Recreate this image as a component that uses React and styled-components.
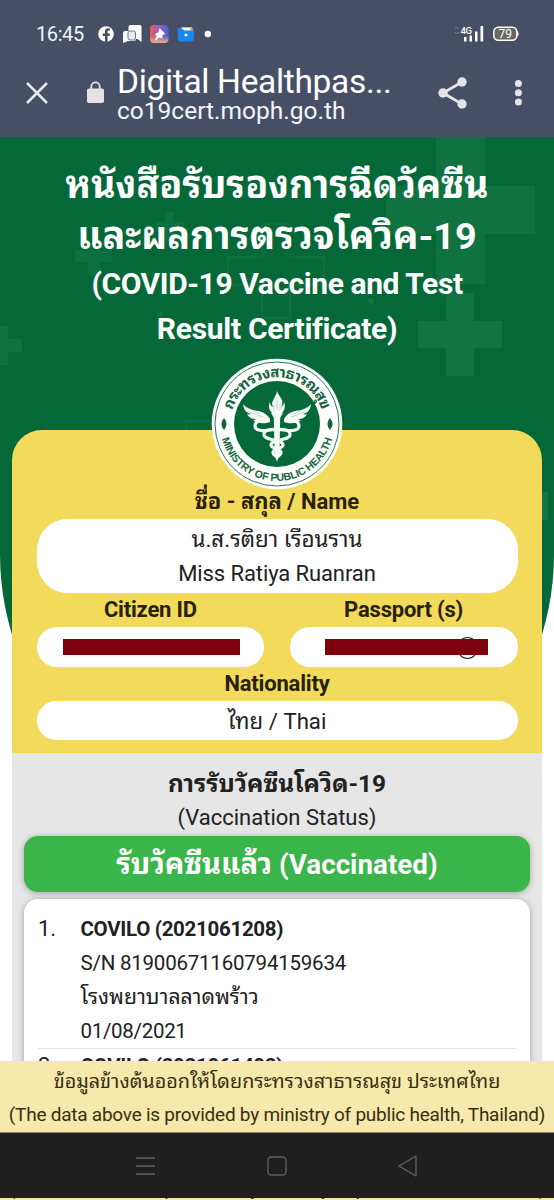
import React from "react";
import styled, { createGlobalStyle } from "styled-components";

const Global = createGlobalStyle`
  *, *::before, *::after { box-sizing: border-box; }
  body { margin: 0; background: #fff; font-family: Roboto, "Noto Sans Thai Looped", "Noto Looped Thai", Loma, Waree, sans-serif; color: #212121; }
`;

const Phone = styled.div`
  width: 554px;
  height: 1200px;
  display: flex;
  flex-direction: column;
  overflow: hidden;
  background: #fff;
`;

const StatusBar = styled.header`
  height: 54px;
  flex: none;
  padding: 14px 35px 0 36px;
  display: flex;
  align-items: center;
  justify-content: space-between;
  background: #474f66;
  color: #fff;
`;

const StatusGroup = styled.div`
  display: flex;
  align-items: center;
  gap: ${(p) => p.$gap}px;
`;

const Clock = styled.span`
  font-size: 20px;
  line-height: 24px;
  letter-spacing: -0.4px;
  color: #f1f3f8;
  width: 55px;
  white-space: nowrap;
`;

const BrowserBar = styled.div`
  height: 83px;
  flex: none;
  display: flex;
  align-items: flex-start;
  background: #474f66;
  border-bottom: 1px solid #3f5560;
  padding: 9px 24px 0 25px;
  color: #fff;
`;

const BarIcon = styled.span`
  display: flex;
  margin-top: ${(p) => p.$top}px;
  margin-right: ${(p) => p.$right || 0}px;
`;

const PageInfo = styled.div`
  width: 320px;
  white-space: nowrap;
`;

const PageTitle = styled.div`
  font-size: 33.5px;
  line-height: 37px;
  height: 36px;
  letter-spacing: -0.33px;
`;

const PageHost = styled.div`
  font-size: 24.5px;
  line-height: 24px;
  color: #f4f5f9;
`;

const Viewport = styled.main`
  position: relative;
  height: 923.5px;
  flex: none;
  overflow: hidden;
  background: #fff;
`;

const Backdrop = styled.div`
  position: absolute;
  inset: 0 0 auto 0;
  height: 694px;
  overflow: hidden;
  background: #056839;
  border-radius: 0 0 277px 277px;
`;

const Content = styled.div`
  position: relative;
`;

const Text = styled.div`
  font-size: ${(p) => p.$size || 22}px;
  line-height: ${(p) => p.$line || 34}px;
  height: ${(p) => p.$line || 34}px;
  font-weight: ${(p) => p.$weight || 400};
  letter-spacing: ${(p) => p.$track || 0}px;
  text-align: ${(p) => p.$align || "center"};
  color: ${(p) => p.$color || "#212121"};
  white-space: nowrap;
`;

const ThaiRun = styled.span`
  font-size: ${(p) => p.$size}px;
`;

const Hero = styled.section`
  height: 293px;
  padding-top: 23px;
`;

const Card = styled.section`
  position: relative;
  margin: 0 12px;
  border-radius: 30px 30px 0 0;
  background: #f2db5b;
  padding: 55px 24.5px 13px;
`;

const Seal = styled.svg`
  position: absolute;
  left: 199px;
  top: -72px;
`;

const Field = styled.div`
  position: relative;
  background: #fff;
  border-radius: ${(p) => p.$radius || 20}px;
  height: ${(p) => p.$height || 39.5}px;
  padding-top: ${(p) => p.$pad || 0}px;
  box-shadow: 0 0 1px #e9dfae;
`;

const Columns = styled.div`
  display: grid;
  grid-template-columns: 1fr 1fr;
  gap: 25.5px;
`;

const Redaction = styled.div`
  position: relative;
  width: ${(p) => p.$width}px;
  height: 16px;
  margin: 12px 0 0 ${(p) => p.$left}px;
  background: #7d000d;
`;

const Ring = styled.span`
  position: absolute;
  left: 167px;
  top: 10px;
  width: 21px;
  height: 22px;
  border: 1.5px solid #222;
  border-radius: 50%;
`;

const Status = styled.section`
  margin: 0 12px;
  padding: 13px 12px 0;
  background: #e6e6e6;
`;

const StatusBadge = styled.div`
  height: 56.5px;
  border-radius: 14px;
  background: #3ab54a;
  box-shadow: 0 1px 6px rgba(0, 0, 0, 0.3);
  margin-bottom: 7px;
`;

const DoseList = styled.div`
  background: #fff;
  border-radius: 14px 14px 0 0;
  box-shadow: 0 1px 6px rgba(0, 0, 0, 0.3);
  padding: 13px 14px 0;
`;

const Dose = styled.div`
  display: grid;
  grid-template-columns: 42.5px 1fr;
  border-bottom: 1px solid #e3e3e3;
`;

const Notice = styled.footer`
  flex: none;
  height: 72px;
  padding-top: 4px;
  background: #f7e9ab;
  border-bottom: 1px solid #8d8664;
`;

const NavBar = styled.nav`
  flex: none;
  height: 65.5px;
  padding-top: 1px;
  display: flex;
  justify-content: center;
  align-items: center;
  gap: 111px;
  background: #1f1f1f;
`;

const Sliver = styled.div`
  flex: none;
  height: 2px;
  overflow: hidden;
  display: flex;
  align-items: flex-end;
  background: #f7e9ab;
`;

const SliverText = styled(Text)`
  width: 554px;
  flex: none;
`;

const PROVIDER = "(The data above is provided by ministry of public health, Thailand)";

function Crosses() {
  return (
    <svg width="554" height="700" viewBox="0 137 554 700" fill="#2b8a57">
      <path opacity=".3" d="M436 137h49v49h50v48h-50v50h-49v-50h-50v-48h50z" />
      <path opacity=".34" d="M446 293h28v28h28v27h-28v28h-28v-28h-28v-27h28z" />
      <path opacity=".24" d="M165 212h9v10h10v9h-10v10h-9v-10h-9v-9h9z" />
      <path opacity=".24" d="M75 250h37v12h-12v13h-12v-13h-13z" />
      <path opacity=".3" d="M0 326h8v13h14v13h-14v13h-8z" />
      <path opacity=".22" fill="none" stroke="#2b8a57" strokeWidth="2.500" d="M262 224h28v33h34v28h-34v33h-28v-33h-34v-28h34z" />
      <path opacity=".2" fill="none" stroke="#2b8a57" strokeWidth="2" d="M186 430v-9h34" />
      <circle opacity=".35" cx="371" cy="301" r="3" />
      <circle opacity=".3" cx="160" cy="314" r="3" />
      <path opacity=".4" d="M542 492h6v28h-6z" />
    </svg>
  );
}

function MinistrySeal() {
  return (
    <Seal width="132" height="132" viewBox="-66 -66 132 132">
      <defs>
        <path id="sealTop" d="M-45.500 12A47 47 0 1 1 45.500 12" />
        <path id="sealBottom" d="M-57 0A57 57 0 0 0 57 0" />
      </defs>
      <circle r="65.300" fill="#fff" />
      <circle r="62" fill="none" stroke="#247a51" strokeWidth="1" />
      <circle r="43" fill="#056839" />
      <g fill="#17643c" fontWeight="700" textAnchor="middle">
        <text fontSize="15">
          <textPath href="#sealTop" startOffset="50%" textLength="119">กระทรวงสาธารณสุข</textPath>
        </text>
        <text fontSize="10.500" fontFamily="Liberation Sans, sans-serif">
          <textPath href="#sealBottom" startOffset="50%" textLength="149">MINISTRY OF PUBLIC HEALTH</textPath>
        </text>
        <path d="M-53-6l2 3 .6 3-.6 3-2 3-2-3-.6-3 .6-3zM53-6l2 3 .6 3-.6 3-2 3-2-3-.6-3 .6-3z" />
      </g>
      <g fill="#f4faf5">
        <path d="M0-33c1 4 4 6 5 9 1 3 0 5-1 7 2-1 3-3 3-5 2 5 0 9-2 11h-10c-3-3-4-7-2-11 0 3 1 4 3 5-3-6 3-9 4-16z" />
        <path d="M-6-11H6L3-6H-3zM-3.200-7h6.400L2.500 30l-2.500 8-2.500-8z" />
        <path d="M-7-5c-4-7-10-8-17-9-4-1-8-3-10-6 1 7 4 9 8 10-2 1-3 0-4 0 2 4 5 5 9 5-1 1-2 1-3 1 4 4 12 4 17 2zM7-5c4-7 10-8 17-9 4-1 8-3 10-6-1 7-4 9-8 10 2 1 3 0 4 0-2 4-5 5-9 5 1 1 2 1 3 1-4 4-12 4-17 2z" />
      </g>
      <g fill="none" stroke="#f4faf5" strokeLinecap="round" strokeWidth="3.200">
        <path d="M-12-3c-6-1-10 1-10 5 0 5 8 5 14 4 9-1 22-2 21 5-1 6-19 4-19 10 0 4 11 3 10 8 0 2-3 3-4 4" />
        <path d="M12-3c6-1 10 1 10 5 0 5-8 5-14 4-9-1-22-2-21 5 1 6 19 4 19 10 0 4-11 3-10 8 0 2 3 3 4 4" />
      </g>
      <g stroke="#9fc7ae" strokeWidth=".6" fill="none">
        <path d="M-31-17l14 7M-28-12l14 5M31-17l-14 7M28-12l-14 5M0-27v12M-3-20v7M3-20v7" />
      </g>
    </Seal>
  );
}

function StatusIcons() {
  return (
    <svg width="114" height="22" viewBox="97 23 114 22">
      <circle cx="106" cy="34" r="7.800" fill="#fff" />
      <path d="M105 42v-6h-2.300v-2.600h2.300v-1.800c0-2.400 1.400-3.400 3.200-3.400l1.900.2v2.200h-1.200c-1 0-1.300.6-1.300 1.200v1.600h2.400l-.4 2.600h-2v6z" fill="#474f66" />
      <path d="M130.500 25h9a2 2 0 0 1 2 2v15l-4-3h-7a2 2 0 0 1-2-2V27a2 2 0 0 1 2-2z" fill="#fff" />
      <path d="M125 31h9a2 2 0 0 1 2 2v6a2 2 0 0 1-2 2h-6l-5 2V33a2 2 0 0 1 2-2z" fill="#fff" />
      <rect x="128" y="31" width="7.500" height="9" rx="2" fill="#e8eaf0" stroke="#707890" />
      <defs>
        <linearGradient id="pinFill" x1="0" y1=".4" x2="1" y2=".5">
          <stop offset="0" stopColor="#ec5d51" />
          <stop offset=".45" stopColor="#9b5bc0" />
          <stop offset="1" stopColor="#4a64df" />
        </linearGradient>
        <linearGradient id="pinGlow" x1="0" y1="0" x2="0" y2="1">
          <stop offset=".6" stopColor="#f2b36a" stopOpacity="0" />
          <stop offset="1" stopColor="#f0b07a" />
        </linearGradient>
      </defs>
      <rect x="150" y="25" width="18.500" height="18" rx="4" fill="url(#pinFill)" />
      <rect x="150" y="25" width="18.500" height="18" rx="4" fill="url(#pinGlow)" />
      <path d="M160 29.500l4 4-2 1-.5 3-2.500-1-3.500 3.500 2-4-1.500-1.500 2.800-1.500z" fill="#fff" stroke="#fff" strokeWidth="1.500" />
      <path d="M180 29l2-2h10l1 3v5h-13z" fill="#f4b15b" />
      <path d="M182 28h8v4h-8z" fill="#fff" />
      <path d="M177.500 28.500h4l3 2h9.800l-.6 9a2 2 0 0 1-2 2h-11.500a2 2 0 0 1-2-2z" fill="#1687f5" />
      <circle cx="186" cy="35" r="1.600" fill="#fff" />
      <circle cx="207.800" cy="34" r="3.200" fill="#fff" />
    </svg>
  );
}

function SignalIcons() {
  return (
    <svg width="65" height="22" viewBox="454 23 65 22">
      <path d="M455 29l1.800-2 1.800 2M455 32l1.800 2 1.800-2" fill="none" stroke="#7c8397" />
      <text x="460.500" y="33.700" fontSize="9.500" fontWeight="500" fill="#fff" textLength="11.500">4G</text>
      <path d="M464 37h2.500v4.500h-2.500zM469.500 35.500h2.500v6h-2.500zM475 31.500h2.500v10h-2.500zM480.500 26h2.700v15.500h-2.700z" fill="#fff" />
      <rect x="493.800" y="27.300" width="23" height="13" rx="4.500" fill="#68675f" stroke="#fff" strokeWidth="1.500" />
      <path d="M517.500 31.500q1.500 2.300 0 4.600z" fill="#fff" stroke="#fff" />
      <text x="505.300" y="38" textAnchor="middle" fontSize="12" fill="#fff">79</text>
    </svg>
  );
}

export default function App() {
  return (
    <Phone>
      <Global />
      <StatusBar>
        <StatusGroup $gap={6}>
          <Clock>16:45</Clock>
          <StatusIcons />
        </StatusGroup>
        <SignalIcons />
      </StatusBar>
      <BrowserBar>
        <BarIcon $top={18} $right={38}>
          <svg width="24" height="24" viewBox="0 0 24 24" stroke="#e8eaef" strokeWidth="2.500">
            <path d="M2 2l20 20M22 2L2 22" />
          </svg>
        </BarIcon>
        <BarIcon $top={17} $right={11}>
          <svg width="19" height="24" viewBox="0 0 19 24">
            <path d="M4.300 11V6.500a4.200 4.200 0 0 1 8.400 0V11" fill="none" stroke="#e4e4e7" strokeWidth="1.800" />
            <rect x="0" y="8.500" width="17" height="14.500" rx="1.800" fill="#e4e4e7" />
          </svg>
        </BarIcon>
        <PageInfo>
          <PageTitle>Digital Healthpas...</PageTitle>
          <PageHost>co19cert.moph.go.th</PageHost>
        </PageInfo>
        <BarIcon $top={13} $right={45}>
          <svg width="32" height="34" viewBox="0 0 32 34" fill="#e4e4e7">
            <path d="M25 6L6 17l19 11" fill="none" stroke="#e4e4e7" strokeWidth="2.800" />
            <circle cx="25" cy="6" r="4.700" />
            <circle cx="6" cy="17" r="4.700" />
            <circle cx="25" cy="28" r="4.700" />
          </svg>
        </BarIcon>
        <BarIcon $top={16}>
          <svg width="8" height="28" viewBox="0 0 8 28" fill="#e4e4e7">
            <circle cx="4.400" cy="4.500" r="3.500" />
            <circle cx="4.400" cy="13.800" r="3.500" />
            <circle cx="4.400" cy="23" r="3.500" />
          </svg>
        </BarIcon>
      </BrowserBar>

      <Viewport>
        <Backdrop>
          <Crosses />
        </Backdrop>
        <Content>
          <Hero>
            <Text $size={37.6} $line={50.5} $weight={700} $color="#fff">หนังสือรับรองการฉีดวัคซีน</Text>
            <Text $size={37.8} $line={50.5} $weight={700} $color="#fff">และผลการตรวจโควิค-19</Text>
            <Text $size={30} $line={45.3} $weight={700} $track={-0.42} $color="#fff">(COVID-19 Vaccine and Test</Text>
            <Text $size={30} $line={45.3} $weight={700} $track={-0.3} $color="#fff">Result Certificate)</Text>
          </Hero>
          <Card>
            <MinistrySeal />
            <Text $weight={700} $color="#292107">ชื่อ - สกุล / Name</Text>
            <Field $height={73.5} $radius={31} $pad={4}>
              <Text $size={22.4} $line={33.5}>น.ส.รติยา เรือนราน</Text>
              <Text $line={33.5} $track={-0.1}>Miss Ratiya Ruanran</Text>
            </Field>
            <Columns>
              <div>
                <Text $line={34.5} $weight={700} $track={-0.2} $color="#292107">Citizen ID</Text>
                <Field $pad={0.1}>
                  <Redaction $left={26.5} $width={177} />
                </Field>
              </div>
              <div>
                <Text $line={34.5} $weight={700} $track={-0.2} $color="#292107">Passport (s)</Text>
                <Field $pad={0.1}>
                  <Ring />
                  <Redaction $left={35.5} $width={163} />
                </Field>
              </div>
            </Columns>
            <Text $line={34} $weight={700} $track={-0.2} $color="#292107">Nationality</Text>
            <Field $pad={1}>
              <Text $size={22.2} $line={39.5}>ไทย / Thai</Text>
            </Field>
          </Card>
          <Status>
            <Text $size={24.4} $line={35} $weight={700}>การรับวัคซีนโควิด-19</Text>
            <Text $line={34.5}>(Vaccination Status)</Text>
            <StatusBadge>
              <Text $size={27.8} $line={56.5} $weight={700} $color="#fff">
                <ThaiRun $size={29.1}>รับวัคซีนแล้ว</ThaiRun> (Vaccinated)
              </Text>
            </StatusBadge>
            <DoseList>
              <Dose>
                <Text $align="left">1.</Text>
                <div>
                  <Text $size={20.5} $track={-0.3} $align="left" $weight={700}>COVILO (2021061208)</Text>
                  <Text $size={20.5} $track={-0.22} $align="left">S/N 81900671160794159634</Text>
                  <Text $size={21.2} $align="left">โรงพยาบาลลาดพร้าว</Text>
                  <Text $size={20.5} $track={-0.3} $align="left">01/08/2021</Text>
                </div>
              </Dose>
              <Dose>
                <Text $align="left">2.</Text>
                <Text $size={20.5} $track={-0.3} $align="left" $weight={700}>COVILO (2021061402)</Text>
              </Dose>
            </DoseList>
          </Status>
        </Content>
      </Viewport>

      <Notice>
        <Text $size={19.8} $line={33.5} $color="#372f10">ข้อมูลข้างต้นออกให้โดยกระทรวงสาธารณสุข ประเทศไทย</Text>
        <Text $size={19} $line={33.5} $track={-0.24} $color="#372f10">{PROVIDER}</Text>
      </Notice>
      <NavBar>
        <svg width="20" height="20" viewBox="0 0 20 20" stroke="#626262" strokeWidth="1.300">
          <path d="M0 2h19M0 10h19M0 18h19" />
        </svg>
        <svg width="20" height="20" viewBox="0 0 20 20" fill="none" stroke="#626262" strokeWidth="1.300">
          <rect x="1" y="1" width="18" height="18" rx="3.500" />
        </svg>
        <svg width="20" height="22" viewBox="0 0 20 22" fill="none" stroke="#626262" strokeWidth="1.300" strokeLinejoin="round">
          <path d="M18 1v20L1 11z" />
        </svg>
      </NavBar>
      <Sliver>
        <SliverText $size={19} $line={22} $track={-0.24} $color="#372f10">{PROVIDER}</SliverText>
      </Sliver>
    </Phone>
  );
}
